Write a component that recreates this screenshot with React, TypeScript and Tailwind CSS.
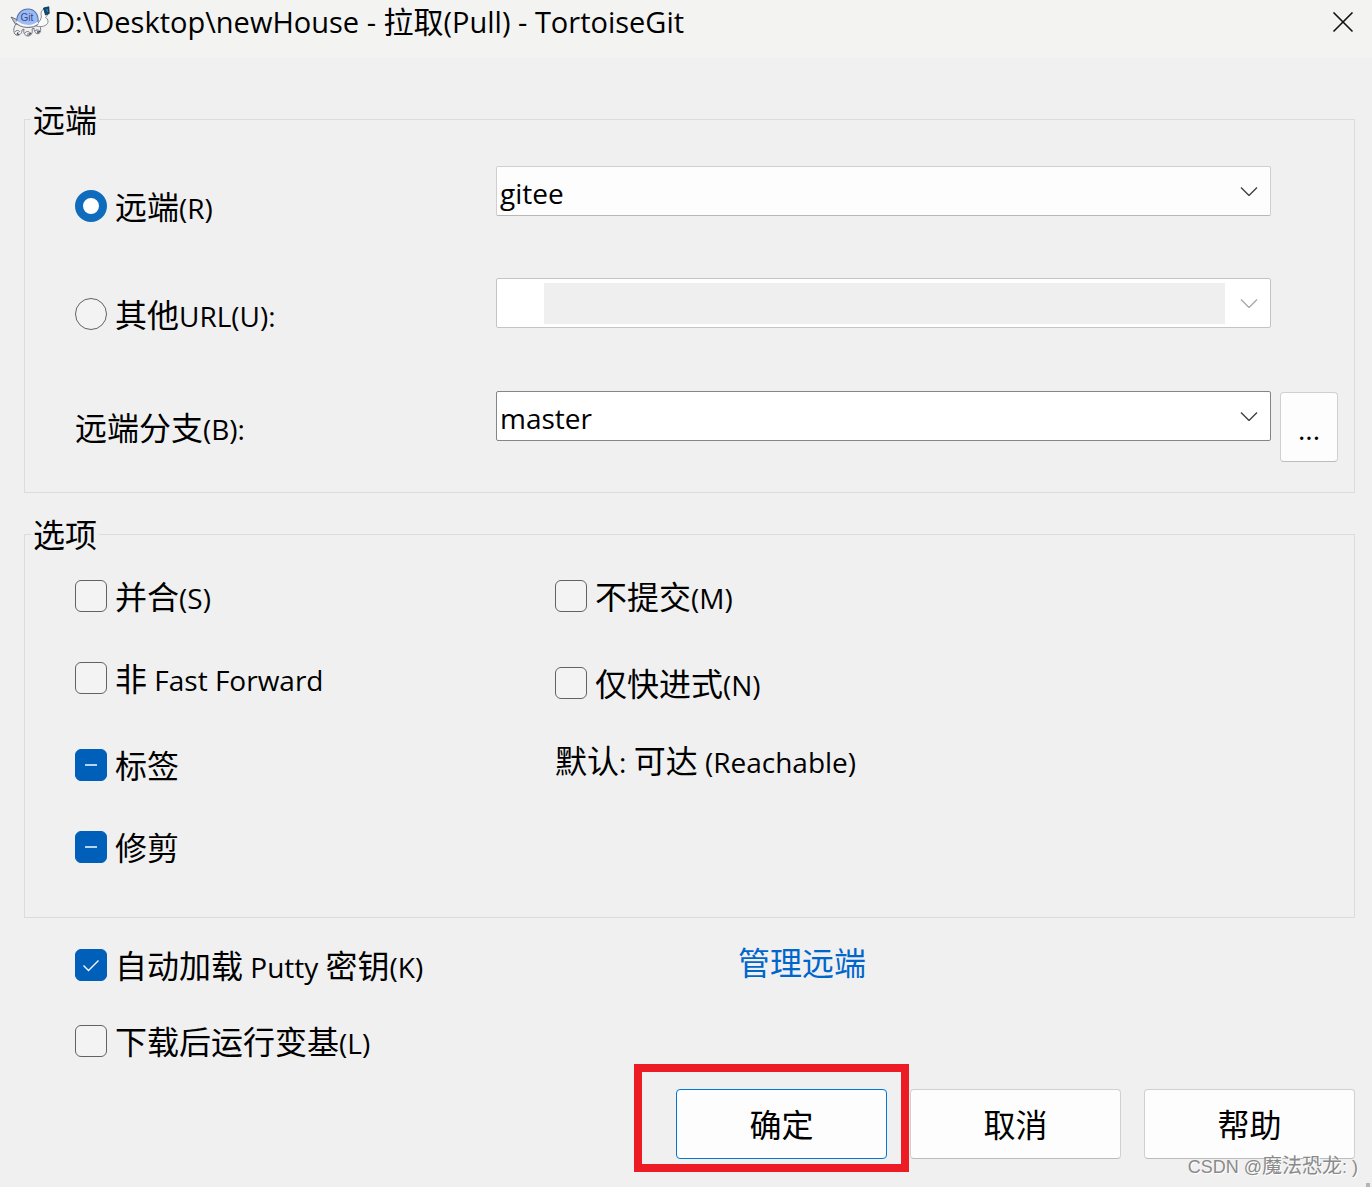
import { useEffect, useRef, useState } from "react";
import type { ReactNode } from "react";

const CJK = /([\u4e00-\u9fff]+)/;

function Mixed({ text }: { text: string }) {
  return (
    <span className="whitespace-pre text-[28px] leading-10">
      {text.split(CJK).map((part, i) =>
        CJK.test(part) ? (
          <span key={i} className="text-[32px]">
            {part}
          </span>
        ) : (
          part
        ),
      )}
    </span>
  );
}

function TurtleIcon() {
  return (
    <svg viewBox="0 0 40 32" className="h-8 w-10 shrink-0" aria-hidden="true">
      <path d="M1 11 L9 14.5 L7 20 C5 18 3 14 1 11 Z" fill="#c3c6cc" stroke="#5a6070" strokeWidth="0.9" />
      <path d="M6 18 C3 22 3 27 6 29 C9 30 12 28 12 24 L14 23 C13 27 15 30 18 30 C21 30 23 27 22 23 L24 22 C24 26 26 28.5 29 27.5 C31.5 26 31 21 29 17 Z" fill="#f1f0ec" stroke="#656b7a" strokeWidth="0.9" />
      <path d="M26 18 C29 17 31 14 31.5 10 C30.5 8 31 4 34 3 L38 6 C38 9 36.5 10.5 35.5 11.5 C38.5 13 39 17 36 19 C33 21 29 21 26 20 Z" fill="#fafaf6" stroke="#7b8190" strokeWidth="0.9" />
      <path d="M7 16 C6 9 11 3 18 3 C25 3 29 9 28 17 C26 19.5 22 20.5 17 20 C12 19.5 9 18.5 7 16 Z" fill="#9cbbf6" stroke="#5570ad" strokeWidth="1.1" />
      <path d="M6.5 15.5 C11 20 22 22 28 16.5" fill="none" stroke="#f8f8f4" strokeWidth="1.8" />
      <path d="M6 17.5 C11 22 23 23.5 28.5 18" fill="none" stroke="#5a6070" strokeWidth="0.8" />
      <path d="M5 26 C6 24 9 24 10 26 M7 29 L8 26 M15 27 C16 25 19 25 20 27 M18 30 V27 M25 25 C26 23.5 28 23.5 29.5 25 M27.5 27.5 V25" fill="none" stroke="#6d7280" strokeWidth="1" />
      <path d="M7 27.5 L9 28.5 M19 28.5 L21 27 M28 26.5 L30 25" stroke="#3e4350" strokeWidth="1.3" />
      <path d="M33.5 2 L38.8 0.8 L39.2 7.5 L35.5 9 Z" fill="#0a4f80" stroke="#0b2740" strokeWidth="0.8" />
      <path d="M36 4 L37.5 3.6 L37.8 6" fill="none" stroke="#2f8fc0" strokeWidth="0.9" />
      <text x="10.5" y="14.5" fontSize="10" fill="#324a82" fontFamily="Liberation Sans, sans-serif">
        Git
      </text>
    </svg>
  );
}

function Chevron({ muted = false }: { muted?: boolean }) {
  return (
    <svg
      viewBox="0 0 18 10"
      aria-hidden="true"
      className={`pointer-events-none absolute right-[13px] top-5 h-2.5 w-[18px] ${muted ? "text-[#a9a9a9]" : "text-[#404040]"}`}
    >
      <path d="M1 1.5 L9 9.5 L17 1.5" fill="none" stroke="currentColor" strokeWidth="1.4" />
    </svg>
  );
}

const selectBase =
  "h-[50px] w-full appearance-none rounded-[2px] border pt-1 pl-[3px] pr-12 text-[28px] leading-10 text-black outline-none";

function Check({
  text,
  checked = false,
  mixed = false,
}: {
  text: string;
  checked?: boolean;
  mixed?: boolean;
}) {
  const ref = useRef<HTMLInputElement>(null);
  const [on, setOn] = useState(checked);
  const [partial, setPartial] = useState(mixed);
  useEffect(() => {
    if (ref.current) ref.current.indeterminate = partial;
  }, [partial]);
  return (
    <label className="flex h-10 items-center gap-2">
      <span className="relative grid size-8 shrink-0 place-items-center">
        <input
          ref={ref}
          type="checkbox"
          checked={on}
          onChange={(e) => {
            setPartial(false);
            setOn(e.target.checked);
          }}
          className="size-8 appearance-none rounded-md border border-[#626262] bg-[#f3f3f3] checked:border-[#005fb8] checked:bg-[#005fb8] indeterminate:border-[#005fb8] indeterminate:bg-[#005fb8]"
        />
        {(on || partial) && (
          <svg viewBox="0 0 32 32" className="pointer-events-none absolute inset-0 size-8" aria-hidden="true">
            <path
              d={partial ? "M10 16 H22" : "M8.5 16.5 L13.5 21.5 L23.5 11.5"}
              fill="none"
              stroke={partial ? "#b8d3ec" : "#ffffff"}
              strokeWidth={partial ? 2 : 1.4}
            />
          </svg>
        )}
      </span>
      <span className="pt-0.5">
        <Mixed text={text} />
      </span>
    </label>
  );
}

function Radio({ text, defaultChecked = false }: { text: string; defaultChecked?: boolean }) {
  return (
    <label className="flex h-10 items-center gap-2">
      <input
        type="radio"
        name="source"
        defaultChecked={defaultChecked}
        className="size-8 shrink-0 appearance-none rounded-full border border-[#626262] bg-[#f3f3f3] checked:border-8 checked:border-[#0f6cbd] checked:bg-white"
      />
      <span className="pt-0.5">
        <Mixed text={text} />
      </span>
    </label>
  );
}

function Group({ title, children }: { title: string; children: ReactNode }) {
  return (
    <fieldset className="min-w-0 border border-[#dcdcdc] pl-1.5">
      <legend className="px-0.5 text-[32px] leading-[39px]">{title}</legend>
      {children}
    </fieldset>
  );
}

function PushButton({ children, primary = false }: { children: ReactNode; primary?: boolean }) {
  return (
    <button
      type="button"
      className={`h-[70px] w-[211px] rounded-[4px] border bg-[#fdfdfd] pt-0.5 text-[32px] leading-10 ${
        primary ? "border-[#0078d4]" : "border-[#d0d0d0] border-b-[#bcbcbc]"
      }`}
    >
      {children}
    </button>
  );
}

export default function App() {
  return (
    <div className="relative min-h-screen overflow-hidden bg-[#f0f0f0] font-['Open_Sans','Noto_Sans_CJK_SC',sans-serif] text-black">
      <header className="flex h-[58px] items-start bg-[#f3f3f2] pl-2.5 pr-[18px]">
        <div className="flex h-11 flex-1 items-center gap-1">
          <TurtleIcon />
          <h1 className="whitespace-pre text-[29px] leading-10">
            D:\Desktop\newHouse - <span className="text-[30px]">拉取</span>(Pull) - TortoiseGit
          </h1>
        </div>
        <button type="button" aria-label="关闭" className="mt-3 flex size-[22px] items-center justify-center">
          <svg viewBox="0 0 22 22" className="size-[22px]" aria-hidden="true">
            <path d="M1.5 0.5 L20.5 19.5 M20.5 0.5 L1.5 19.5" stroke="#111111" strokeWidth="1.6" />
          </svg>
        </button>
      </header>

      <main className="pl-6 pr-[17px] pt-[42px]">
        <Group title="远端">
          <div className="pb-[30px] pl-11 pr-4 pt-[27px]">
            <div className="flex min-h-28 items-start">
              <div className="w-[421px] shrink-0 pt-5">
                <Radio text="远端(R)" defaultChecked />
              </div>
              <div className="relative mr-[67px] flex-1">
                <select aria-label="远端" className={`${selectBase} border-[#cfcfcf] border-b-[#b8b8b8] bg-[#fdfdfd]`}>
                  <option>gitee</option>
                </select>
                <Chevron />
              </div>
            </div>
            <div className="flex min-h-[113px] items-start">
              <div className="w-[421px] shrink-0 pt-4">
                <Radio text="其他URL(U):" />
              </div>
              <div className="relative mr-[67px] flex-1">
                <select aria-label="其他URL" disabled className={`${selectBase} border-[#c4c4c4] bg-white opacity-100`}>
                  <option></option>
                </select>
                <span className="absolute bottom-1 left-12 right-[46px] top-[5px] bg-[#efefef]" />
                <Chevron muted />
              </div>
            </div>
            <div className="flex items-start">
              <label htmlFor="branch" className="w-[421px] shrink-0 pt-[17px]">
                <Mixed text="远端分支(B):" />
              </label>
              <div className="relative flex-1">
                <select id="branch" className={`${selectBase} border-[#858585] bg-white`}>
                  <option>master</option>
                </select>
                <Chevron />
              </div>
              <button
                type="button"
                aria-label="浏览分支"
                className="ml-[9px] mt-px h-[70px] w-[58px] rounded-[4px] border border-[#d0d0d0] border-b-[#bcbcbc] bg-[#fdfdfd] pt-1 text-[28px] leading-10"
              >
                ...
              </button>
            </div>
          </div>
        </Group>

        <div className="mt-[22px]">
          <Group title="选项">
            <div className="grid grid-cols-[480px_1fr] pb-[50px] pl-11 pt-[22px]">
              <div className="flex flex-col gap-[47px]">
                <div className="flex flex-col gap-[42px]">
                  <Check text="并合(S)" />
                  <Check text="非 Fast Forward" />
                </div>
                <div className="flex flex-col gap-[42px]">
                  <Check text="标签" mixed />
                  <Check text="修剪" mixed />
                </div>
              </div>
              <div className="flex flex-col">
                <Check text="不提交(M)" />
                <div className="pt-[47px]">
                  <Check text="仅快进式(N)" />
                </div>
                <p className="pt-[38px]">
                  <Mixed text="默认: 可达 (Reachable)" />
                </p>
              </div>
            </div>
          </Group>
        </div>

        <div className="grid grid-cols-[663px_1fr] pl-[51px] pt-[27px]">
          <div className="flex flex-col gap-9">
            <Check text="自动加载 Putty 密钥(K)" checked />
            <Check text="下载后运行变基(L)" />
          </div>
          <div>
            <a href="#remotes" className="block w-fit text-[32px] leading-9 text-[#0066cc]">
              管理远端
            </a>
          </div>
        </div>

        <footer className="flex justify-end gap-[23px] pb-7 pt-7">
          <div className="relative">
            <PushButton primary>确定</PushButton>
            <span className="pointer-events-none absolute -bottom-[13px] -left-[42px] -right-[22px] -top-[25px] border-8 border-[#ed1c24]" />
          </div>
          <PushButton>取消</PushButton>
          <PushButton>帮助</PushButton>
        </footer>
      </main>

      <p className="absolute bottom-1 right-3.5 whitespace-pre font-['Liberation_Sans','Noto_Sans_CJK_SC',sans-serif] text-[18px] leading-8 text-[#8a8a8a] [text-shadow:1px_1px_0_#ffffff]">
        CSDN @<span className="text-[20px]">魔法恐龙</span>: )
      </p>
      <span className="absolute bottom-0 right-0.5 size-1 bg-[#b5b5b5]" />
    </div>
  );
}
